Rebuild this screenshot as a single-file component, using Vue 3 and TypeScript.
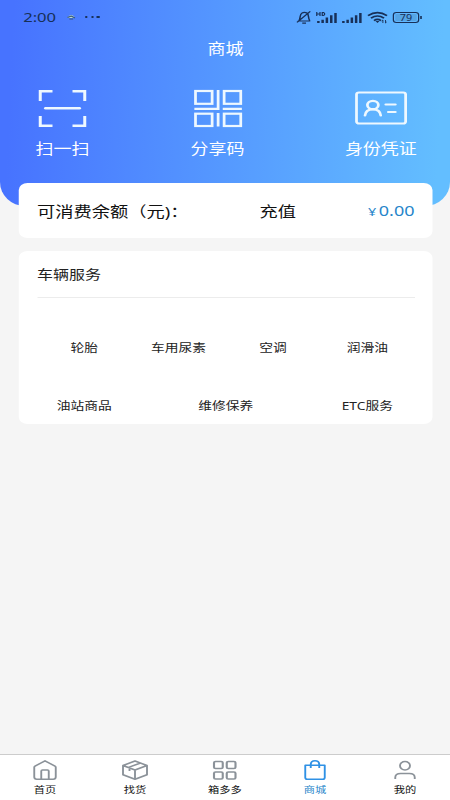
<script setup lang="ts">
import { ref } from 'vue'

interface Tab { id: string; label: string }

const services: string[][] = [
  ['轮胎', '车用尿素', '空调', '润滑油'],
  ['油站商品', '维修保养', 'ETC服务'],
]
const tabs: Tab[] = [
  { id: 'home', label: '首页' },
  { id: 'cargo', label: '找货' },
  { id: 'box', label: '箱多多' },
  { id: 'mall', label: '商城' },
  { id: 'mine', label: '我的' },
]
const active = ref('mall')
</script>

<template>
  <div class="page">
    <header class="hero">
      <div class="status">
        <div class="status-left">
          <span class="time">2:00</span>
          <svg class="weather" width="8" height="8" viewBox="0 0 8 8">
            <path d="M.8 5Q4 -1 7.2 5Z" fill="#b9d7ce" />
            <path d="M1 4.5L4 3L7 5M2.5 6H5.5" stroke="#315582" fill="none" />
          </svg>
          <span class="dots"><i></i><i></i><i></i></span>
        </div>
        <svg class="status-icons" width="106" height="16" viewBox="0 0 106 16" fill="none" stroke="#183058">
          <path d="M2.2 12H12.2M3.2 11.6C4.6 9.5 3.4 5.5 5.6 4Q7.5 2.6 9.6 4C11.4 5.6 10.2 9 11.8 11.6M5.8 14.2H8.8M1.6 13.4L12.2 2.4" stroke-width="1.2" />
          <path d="M17.4 3V7M20 3V7M17.4 5H20M21.8 3.4V6.6H22.8Q24.8 5 22.8 3.4Z" stroke-width=".95" />
          <path d="M18.7 14V12M22.1 14V10.8M25.5 14V8.6M29 14V6.2M32.4 14V4M38.7 14V12M42.1 14V10.8M45.5 14V8.6M48.9 14V6.2M52.3 14V4" stroke-width="2" />
          <path d="M58.4 6.6Q66 .6 73.6 6.6M60.8 9.2Q66 4.8 71.2 9.2M63.2 11.6Q66 9.2 68.8 11.6" stroke-width="1.6" />
          <path d="M64.4 12L66 14L67.6 12Z" fill="#183058" stroke="none" />
          <path d="M70.3 14V11M69.4 12L70.3 11M72.4 11V14L73.3 13" stroke-width=".8" />
          <rect x="78.7" y="3.5" width="20.2" height="10" rx="2.4" />
          <rect x="80.2" y="5" width="17.2" height="7" rx="1" fill="#4689bd" fill-opacity=".4" stroke="none" />
          <path d="M100.8 7V10" stroke-width="1.3" />
          <text x="88.8" y="11.6" text-anchor="middle" class="battery">79</text>
        </svg>
      </div>
      <h1 class="title">商城</h1>
      <nav class="actions">
        <button class="action scan">
          <svg width="44" height="42" viewBox="0 0 44 42" fill="none" stroke="#eef8ff" stroke-width="2.4">
            <path d="M4.2 14V4.2H14M30 4.2H39.8V14M39.8 29V38.8H30M14 38.8H4.2V29" />
            <path d="M8.4 21.3H35.6" stroke-linecap="round" />
          </svg>
          <span>扫一扫</span>
        </button>
        <button class="action share">
          <svg width="44" height="42" viewBox="0 0 44 42" fill="none" stroke="#eef8ff" stroke-width="2.2">
            <rect x="4.4" y="4" width="13.3" height="12.8" /><rect x="27.3" y="4" width="13.3" height="12.8" />
            <rect x="4.4" y="26.7" width="13.3" height="12.3" /><rect x="27.3" y="26.7" width="13.3" height="12.3" />
            <path d="M22.5 3V21.8H3.5M26.2 21.8H41.5M22.5 26V39.5" />
          </svg>
          <span>分享码</span>
        </button>
        <button class="action identity">
          <svg width="44" height="42" viewBox="0 0 44 42" fill="none" stroke="#eef8ff" stroke-width="2.2">
            <rect x="2.2" y="5.5" width="39.3" height="31" rx="2" />
            <ellipse cx="15.3" cy="18" rx="4.4" ry="4.2" />
            <path d="M9 28.5Q9.5 22.3 15.3 22.3T21.6 28.5M25.6 17.5H33.3M27.6 25H33.3" stroke-linecap="round" />
          </svg>
          <span>身份凭证</span>
        </button>
      </nav>
    </header>

    <main class="content">
      <section class="card balance">
        <span class="balance-label">可消费余额（元)：</span>
        <span class="recharge">充值</span>
        <span class="amount"><small>¥</small>0.00</span>
      </section>
      <section class="card services">
        <h2>车辆服务</h2>
        <div v-for="(row, i) in services" :key="i" class="service-row">
          <span v-for="item in row" :key="item">{{ item }}</span>
        </div>
      </section>
    </main>

    <footer class="tabbar">
      <button v-for="tab in tabs" :key="tab.id" :class="['tab', { active: tab.id === active }]" @click="active = tab.id">
        <svg width="24" height="24" viewBox="0 0 24 24" fill="none" stroke="currentColor" stroke-width="1.5" stroke-linejoin="round">
          <path v-if="tab.id === 'home'" d="M3.4 9.2Q3.4 8.6 4 8.2L12 2.8L20 8.2Q20.6 8.6 20.6 9.2V19Q20.6 21.2 18.6 21.2H5.4Q3.4 21.2 3.4 19ZM9 21V13Q9 12 10 12H14Q15 12 15 13V21" />
          <path v-else-if="tab.id === 'cargo'" d="M2.4 7.5L12 3L21.6 7.5V16.8L12 21.3L2.4 16.8ZM2.4 7.5L12 12L21.6 7.5M12 12V21.3M6.8 9.4L16.4 5M7.6 9.8V13" />
          <g v-else-if="tab.id === 'box'" stroke-width="1.7">
            <rect x="3.2" y="3.5" width="7" height="7" rx="1.2" /><rect x="13.4" y="3.5" width="7" height="7" rx="1.2" />
            <rect x="3.2" y="14" width="7" height="7" rx="1.2" /><rect x="13.4" y="14" width="7" height="7" rx="1.2" />
          </g>
          <path v-else-if="tab.id === 'mall'" d="M4.2 7.3H19.8V19.5Q19.8 21.3 18.1 21.3H5.9Q4.2 21.3 4.2 19.5ZM8.6 10V6.6Q8.6 2.8 12 2.8T15.4 6.6V10" />
          <g v-else><ellipse cx="12" cy="7.8" rx="4" ry="4.2" /><path d="M4.2 21V19.5Q4.2 15.5 8.5 15.5H15.5Q19.8 15.5 19.8 19.5V21" /></g>
        </svg>
        <span>{{ tab.label }}</span>
      </button>
    </footer>
  </div>
</template>

<style>
body { background: #f5f5f5; overflow: hidden; }
</style>

<style scoped>
* { box-sizing: border-box; }
.page {
  width: 360px;
  height: 800px;
  display: flex;
  flex-direction: column;
  transform: scaleX(1.25);
  transform-origin: 0 0;
  background: #f5f5f5;
  color: #111;
  font-family: "Noto Sans", "Noto Sans CJK SC", sans-serif;
}
button { border: 0; padding: 0; margin: 0; background: none; font-family: inherit; color: inherit; }
svg { display: block; flex: none; }
.hero {
  height: 206px;
  flex: none;
  background: linear-gradient(92deg, #4773ff 3%, #63beff 97%);
  border-radius: 0 0 20px 20px / 0 0 24px 24px;
  color: #fff;
}
.status { height: 34px; display: flex; justify-content: space-between; padding: 0 18px 0 18.5px; align-items: center; color: #173058; }
.status-left { display: flex; align-items: center; }
.time { font-size: 13.3px; line-height: 18px; width: 34.5px; }
.dots { display: flex; gap: 2.2px; margin-left: 7px; }
.dots i { width: 2.4px; height: 2.8px; border-radius: 50%; background: #173058; }
.battery { font-size: 8.6px; font-family: "Noto Sans", sans-serif; fill: #183058; stroke: none; }
.title { margin: 0; padding: 1px 0 0 1px; font-size: 14.4px; line-height: 28px; font-weight: 400; text-align: center; }
.actions { display: flex; justify-content: space-between; padding: 24px 26.5px 0 28px; }
.action { display: flex; flex-direction: column; align-items: center; color: #fff; font-size: 14.4px; line-height: 22px; gap: 9px; }
.action span { white-space: nowrap; }
.content { padding: 0 13.6px 0 14.8px; margin-top: -23px; flex: 1; }
.card { background: #fff; border-radius: 7px; padding: 0 14.8px; }
.balance { height: 55px; display: grid; grid-template-columns: 178px 1fr auto; align-items: center; font-size: 14.6px; line-height: 24px; padding-top: 1px; }
.amount { color: #2685ca; font-size: 14.4px; }
.amount small { font-size: 11.5px; margin-right: 2px; }
.services { margin-top: 13px; height: 173px; }
.services h2 { margin: 0; height: 46.5px; border-bottom: 1px solid #ececec; font-size: 12.8px; line-height: 46px; font-weight: 400; color: #222; }
.service-row { display: flex; justify-content: space-between; padding-top: 42px; font-size: 11px; line-height: 16px; color: #222; }
.service-row span { width: 25%; text-align: center; white-space: nowrap; }
.tabbar { height: 46px; flex: none; display: grid; grid-template-columns: repeat(5, 1fr); background: #fff; border-top: 1px solid #ccc; }
.tab { display: flex; flex-direction: column; align-items: center; padding-top: 3px; color: #8b9299; }
.tab span { font-size: 9px; line-height: 13px; color: #111; margin-top: 1px; }
.tab.active { color: #2f91e5; }
.tab.active span { color: #2685ca; }
</style>
